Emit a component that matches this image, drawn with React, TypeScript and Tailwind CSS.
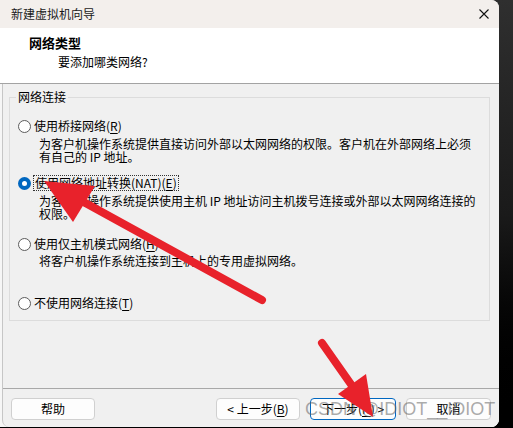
import React from "react";

const cjk = "font-['Microsoft_YaHei','Noto_Sans_CJK_SC',sans-serif]";

function Radio({ checked }: { checked?: boolean }) {
  if (checked) {
    return (
      <span className="w-[13px] h-[13px] rounded-full bg-[#0067c0] flex items-center justify-center shrink-0">
        <span className="w-[5px] h-[5px] rounded-full bg-white" />
      </span>
    );
  }
  return <span className="w-[13px] h-[13px] rounded-full border border-[#5c5c5c] bg-white shrink-0" />;
}

function U({ c }: { c: string }) {
  return <span className="underline underline-offset-[2px]">{c}</span>;
}

function Btn({ children, primary }: { children: React.ReactNode; primary?: boolean }) {
  return (
    <div
      className={
        "h-[22px] rounded-[4px] flex items-center justify-center text-[12px] leading-[14px] text-black " +
        (primary ? "border border-[#0067c0] bg-[#fdfdfd]" : "border border-[#d0d0d0] bg-[#fdfdfd]")
      }
    >
      {children}
    </div>
  );
}

export default function App() {
  return (
    <div className={"relative w-[513px] h-[428px] bg-gradient-to-b from-[#2f2f2f] via-[#1a1a1a] to-[#000000] flex overflow-hidden " + cjk}>
      <div className="w-[499px] h-[427px] rounded-r-[8px] overflow-hidden flex flex-col bg-[#f3f3f3]">
        {/* title bar */}
        <div className="h-[28px] bg-[#f3efec] flex items-center justify-between pl-[11px] pr-[10px] shrink-0">
          <span className="text-[12px] leading-[14px] text-[#1a1a1a]">新建虚拟机向导</span>
          <svg width="10" height="10" viewBox="0 0 10 10" className="mr-[0px]">
            <path d="M0.5 0.5 L9.5 9.5 M9.5 0.5 L0.5 9.5" stroke="#111" strokeWidth="1.1" fill="none" />
          </svg>
        </div>
        {/* header */}
        <div className="h-[56px] bg-white border-b border-[#a3a3a3] shrink-0 pt-[7px] flex flex-col">
          <div className="pl-[29px] text-[13px] leading-[16px] font-bold text-black">网络类型</div>
          <div className="pl-[58px] mt-[3px] text-[12px] leading-[16px] text-black">要添加哪类网络?</div>
        </div>
        {/* body */}
        <div className="flex-1 flex pl-[2px] bg-[#f6f6f6]">
          <div className="flex-1 flex flex-col bg-[#f0f0f0] border-l border-[#c6c6c6] rounded-bl-[7px]">
            <div className="h-[304px] pt-[13px] pl-[6px] shrink-0">
              <div className="relative w-[481px] h-[224px] border border-[#dcdcdc] pl-[8px] pt-[20px] text-[12px] text-black">
                <span className="absolute -top-[9px] left-[6px] px-[2px] bg-[#f0f0f0] leading-[16px]">网络连接</span>

                <div className="h-[16px] flex items-center">
                  <Radio />
                  <span className="ml-[3px] leading-[16px]">使用桥接网络(<U c="R" />)</span>
                </div>
                <div className="ml-[21px] mt-[3px] leading-[13px]">
                  <div>为客户机操作系统提供直接访问外部以太网网络的权限。客户机在外部网络上必须</div>
                  <div>有自己的 IP 地址。</div>
                </div>

                <div className="h-[16px] flex items-center mt-[12px]">
                  <Radio checked />
                  <span className="ml-[2px] leading-[14px] border border-dotted border-[#333] px-[1px]">
                    使用网络地址转换(NAT)(<U c="E" />)
                  </span>
                </div>
                <div className="ml-[21px] mt-[3px] leading-[13px]">
                  <div>为客户机操作系统提供使用主机 IP 地址访问主机拨号连接或外部以太网网络连接的</div>
                  <div>权限。</div>
                </div>

                <div className="h-[16px] flex items-center mt-[16px]">
                  <Radio />
                  <span className="ml-[3px] leading-[16px]">使用仅主机模式网络(<U c="H" />)</span>
                </div>
                <div className="ml-[21px] mt-[2px] leading-[13px]">
                  <div>将客户机操作系统连接到主机上的专用虚拟网络。</div>
                </div>

                <div className="h-[16px] flex items-center mt-[28px]">
                  <Radio />
                  <span className="ml-[3px] leading-[16px]">不使用网络连接(<U c="T" />)</span>
                </div>
              </div>
            </div>
            {/* separator */}
            <div className="h-px bg-[#a8a8a8] shrink-0" />
            {/* buttons */}
            <div className="flex pt-[9px]">
              <div className="ml-[8px] w-[84px]">
                <Btn>帮助</Btn>
              </div>
              <div className="ml-[121px] w-[84px]">
                <Btn>&lt; 上一步(<U c="B" />)</Btn>
              </div>
              <div className="ml-[10px] w-[86px]">
                <Btn primary>下一步(<U c="N" />) &gt;</Btn>
              </div>
              <div className="ml-[10px] w-[85px]">
                <Btn>取消</Btn>
              </div>
            </div>
          </div>
        </div>
      </div>

      {/* watermark */}
      <div className="absolute left-[305px] top-[400px] text-[18px] leading-[18px] font-['Liberation_Sans',Arial,sans-serif] text-[rgba(100,100,100,0.55)] whitespace-nowrap pointer-events-none">
        CSDN @IDIOT__IDIOT
      </div>

      {/* red arrows */}
      <svg className="absolute left-0 top-0 pointer-events-none" width="513" height="428" viewBox="0 0 513 428">
        <line x1="262" y1="300" x2="80" y2="200" stroke="#e8222b" strokeWidth="8" strokeLinecap="round" />
        <polygon points="44,181 95,186 73,222" fill="#e8222b" />
        <line x1="322" y1="343" x2="355" y2="390" stroke="#e8222b" strokeWidth="8" strokeLinecap="round" />
        <polygon points="373,417 366,374 338,394" fill="#e8222b" />
      </svg>
    </div>
  );
}
